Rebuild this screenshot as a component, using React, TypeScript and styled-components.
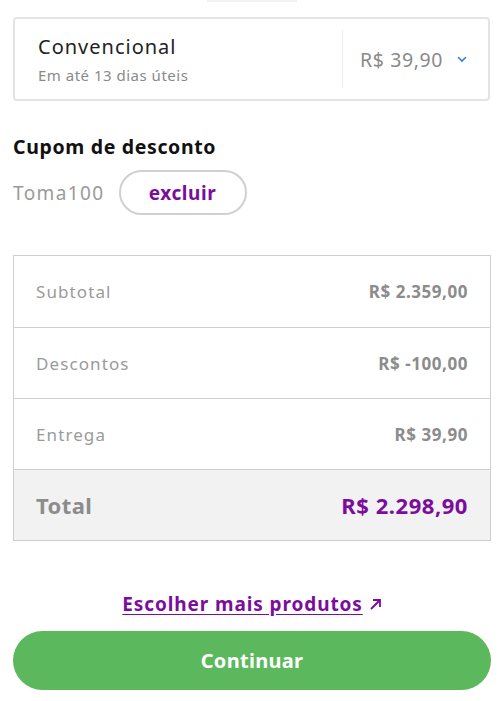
import React from "react";
import styled, { createGlobalStyle } from "styled-components";

const GlobalStyle = createGlobalStyle`
  html, body {
    margin: 0;
    padding: 0;
    background: #fff;
    font-family: "Noto Sans", "Open Sans", sans-serif;
  }
`;

const Page = styled.div`
  width: 500px;
  height: 701px;
  padding: 0 9px 0 13px;
  box-sizing: border-box;
  display: flex;
  flex-direction: column;
  overflow: hidden;
`;

const TopHandle = styled.div`
  align-self: center;
  width: 90px;
  height: 2px;
  background: #f1f1f1;
  margin-bottom: 15px;
`;

const ShippingCard = styled.div`
  height: 84px;
  border: 2px solid #e4e4e4;
  border-radius: 4px;
  box-sizing: border-box;
  display: flex;
  align-items: center;
  margin-right: 1px;
`;

const ShippingInfo = styled.div`
  flex: 1;
  padding-left: 23px;
  display: flex;
  flex-direction: column;
  gap: 5px;
`;

const ShippingName = styled.span`
  font-size: 20px;
  color: #222;
  letter-spacing: 1px;
`;

const ShippingDays = styled.span`
  font-size: 15px;
  color: #8a8a8a;
  letter-spacing: 0.5px;
`;

const PriceSelect = styled.div`
  width: 146px;
  align-self: stretch;
  margin: 11px 0;
  border-left: 1px solid #ececec;
  display: flex;
  align-items: center;
  padding-left: 17px;
  box-sizing: border-box;
  gap: 14px;
`;

const ShippingPrice = styled.span`
  font-size: 19.5px;
  color: #8a8a8a;
  letter-spacing: 0.6px;
`;

const SectionTitle = styled.h2`
  margin: 32px 0 0;
  font-size: 19.5px;
  font-weight: 700;
  color: #111;
  letter-spacing: 0.65px;
`;

const CouponRow = styled.div`
  display: flex;
  align-items: center;
  gap: 14px;
  margin-top: 10px;
`;

const CouponCode = styled.span`
  font-size: 19px;
  color: #9a9a9a;
  letter-spacing: 1.4px;
`;

const PillButton = styled.button`
  width: 128px;
  height: 45px;
  border: 2px solid #d0d0d0;
  border-radius: 24px;
  background: #fff;
  color: #7b0c9c;
  font-family: inherit;
  font-size: 19px;
  font-weight: 700;
  letter-spacing: 0.6px;
  cursor: pointer;
`;

const Summary = styled.div`
  margin-top: 40px;
  border: 1px solid #cfcfcf;
  display: flex;
  flex-direction: column;
`;

const SummaryRow = styled.div<{ $total?: boolean }>`
  height: 71px;
  box-sizing: border-box;
  display: flex;
  align-items: center;
  justify-content: space-between;
  padding: 0 22px;
  background: ${(p) => (p.$total ? "#f2f2f2" : "#fff")};
  & + & {
    border-top: 1px solid #cfcfcf;
  }
`;

const RowLabel = styled.span<{ $total?: boolean }>`
  font-size: ${(p) => (p.$total ? "22px" : "17px")};
  font-weight: ${(p) => (p.$total ? 700 : 400)};
  color: ${(p) => (p.$total ? "#8c8c8c" : "#9a9a9a")};
  letter-spacing: ${(p) => (p.$total ? "0.4px" : "1.1px")};
`;

const RowValue = styled.span<{ $total?: boolean }>`
  font-size: ${(p) => (p.$total ? "22px" : "17px")};
  font-weight: 700;
  color: ${(p) => (p.$total ? "#7b0c9c" : "#8c8c8c")};
  letter-spacing: 0.55px;
`;

const MoreLink = styled.a`
  margin-top: 50px;
  align-self: center;
  display: flex;
  align-items: center;
  gap: 6px;
  color: #7b0c9c;
  font-size: 19px;
  font-weight: 700;
  letter-spacing: 0.9px;
  cursor: pointer;
  span {
    text-decoration: underline;
    text-underline-offset: 3px;
  }
`;

const ContinueButton = styled.button`
  margin-top: 14px;
  height: 59px;
  border: none;
  border-radius: 30px;
  background: #5cb85c;
  color: #fff;
  font-family: inherit;
  font-size: 20px;
  font-weight: 700;
  letter-spacing: 0.3px;
  cursor: pointer;
`;

const rows = [
  { label: "Subtotal", value: "R$ 2.359,00" },
  { label: "Descontos", value: "R$ -100,00" },
  { label: "Entrega", value: "R$ 39,90" },
];

const App = () => {
  return (
    <>
      <GlobalStyle />
      <Page>
        <TopHandle />
        <ShippingCard>
          <ShippingInfo>
            <ShippingName>Convencional</ShippingName>
            <ShippingDays>Em até 13 dias úteis</ShippingDays>
          </ShippingInfo>
          <PriceSelect>
            <ShippingPrice>R$ 39,90</ShippingPrice>
            <svg width="10" height="7" viewBox="0 0 10 7">
              <path
                d="M1.5 1.5 L5 5 L8.5 1.5"
                fill="none"
                stroke="#3b7fe0"
                strokeWidth="1.6"
                strokeLinecap="round"
              />
            </svg>
          </PriceSelect>
        </ShippingCard>

        <SectionTitle>Cupom de desconto</SectionTitle>
        <CouponRow>
          <CouponCode>Toma100</CouponCode>
          <PillButton>excluir</PillButton>
        </CouponRow>

        <Summary>
          {rows.map((r) => (
            <SummaryRow key={r.label}>
              <RowLabel>{r.label}</RowLabel>
              <RowValue>{r.value}</RowValue>
            </SummaryRow>
          ))}
          <SummaryRow $total>
            <RowLabel $total>Total</RowLabel>
            <RowValue $total>R$ 2.298,90</RowValue>
          </SummaryRow>
        </Summary>

        <MoreLink>
          <span>Escolher mais produtos</span>
          <svg width="13" height="13" viewBox="0 0 13 13">
            <path
              d="M2 11 L11 2 M4 2 H11 V9"
              fill="none"
              stroke="#7b0c9c"
              strokeWidth="1.8"
            />
          </svg>
        </MoreLink>
        <ContinueButton>Continuar</ContinueButton>
      </Page>
    </>
  );
};

export default App;
